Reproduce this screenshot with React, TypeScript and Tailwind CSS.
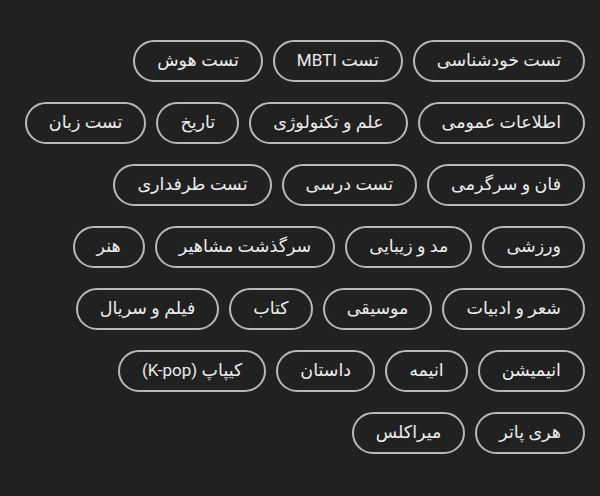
type Item = { fa: string; en?: string };

// rows follow the reference wrapping
const rows: Item[][] = [
  [{ fa: "تست خودشناسی" }, { fa: "تست ", en: "MBTI" }, { fa: "تست هوش" }],
  [{ fa: "اطلاعات عمومی" }, { fa: "علم و تکنولوژی" }, { fa: "تاریخ" }, { fa: "تست زبان" }],
  [{ fa: "فان و سرگرمی" }, { fa: "تست درسی" }, { fa: "تست طرفداری" }],
  [{ fa: "ورزشی" }, { fa: "مد و زیبایی" }, { fa: "سرگذشت مشاهیر" }, { fa: "هنر" }],
  [{ fa: "شعر و ادبیات" }, { fa: "موسیقی" }, { fa: "کتاب" }, { fa: "فیلم و سریال" }],
  [{ fa: "انیمیشن" }, { fa: "انیمه" }, { fa: "داستان" }, { fa: "کیپاپ ", en: "(K-pop)" }],
  [{ fa: "هری پاتر" }, { fa: "میراکلس" }],
];

export default function App() {
  return (
    <div
      dir="rtl"
      className="min-h-[496px] w-[600px] bg-[#212121] pt-[40px] pr-[15px] pl-[10px]"
      style={{ fontFamily: "Roboto, 'DejaVu Sans', sans-serif" }}
    >
      <div className="flex flex-col gap-y-[20px]">
        {rows.map((row, i) => (
          <div key={i} className="flex gap-x-[10px]">
            {row.map((item) => (
              <button
                key={item.fa + (item.en ?? "")}
                className="h-[42px] px-[22px] rounded-full border-2 border-[#b8b8b8] text-[17.5px] text-[#ececec] leading-none whitespace-nowrap"
              >
                {item.fa}
                {item.en && <span className="text-[17px]">{item.en}</span>}
              </button>
            ))}
          </div>
        ))}
      </div>
    </div>
  );
}
